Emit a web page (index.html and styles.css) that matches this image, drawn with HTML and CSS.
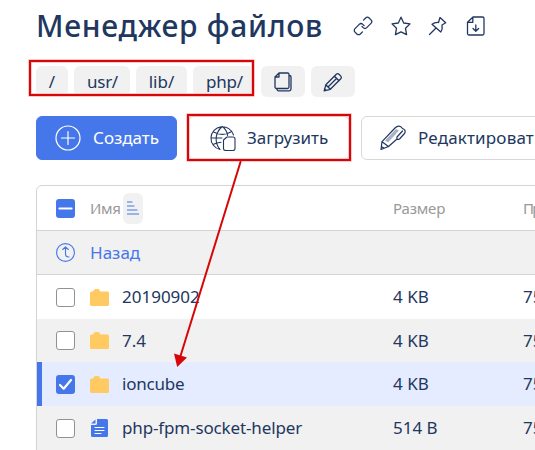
FILE: index.html
```html
<!DOCTYPE html>
<html lang="ru">
<head>
<meta charset="utf-8">
<title>Менеджер файлов</title>
<link rel="stylesheet" href="styles.css">
</head>
<body>
<header class="page-head">
  <h1 class="title">Менеджер файлов</h1>
  <div class="head-icons">
    <svg class="ico" viewBox="0 0 20 20"><g transform="rotate(-45 10 10)"><path d="M5.500 13.800H2.500A2.500 2.500 0 0 1 0 11.300V8.700A2.500 2.500 0 0 1 2.500 6.200H8.500A2.500 2.500 0 0 1 11 8.700V10.500M14.500 6.200H17.500A2.500 2.500 0 0 1 20 8.700V11.300A2.500 2.500 0 0 1 17.500 13.800H11.500A2.500 2.500 0 0 1 9 11.300V9.500"/></g></svg>
    <svg class="ico" viewBox="0 0 20 20"><path d="M10 1.200 12.700 7 19 7.900 14.500 12.200 15.600 18.700 10 15.900 4.400 18.700 5.500 12.200 1 7.900 7.300 7Z"/></svg>
    <svg class="ico" viewBox="0 0 20 20"><path d="M12 1.500 17.700 6.800 14 9C14.700 12 14 14 12.800 16L4 8.200C6 6.800 8 6.300 10.500 6.500ZM8 12 1.500 18.500"/></svg>
    <svg class="ico" viewBox="0 0 20 20"><path d="M7 1H16.500a1.500 1.500 0 0 1 1.500 1.500V17.500a1.500 1.500 0 0 1-1.500 1.500H3A1.500 1.500 0 0 1 1.500 17.500V6.300ZM6.800 1.500V6.300H1.500M9.800 9V15M7 12.500 9.800 15.300 12.600 12.500"/></svg>
  </div>
</header>

<nav class="crumbs">
  <a class="chip chip-root">/</a>
  <a class="chip chip-usr">usr/</a>
  <a class="chip chip-lib">lib/</a>
  <a class="chip chip-php">php/</a>
  <button class="chip chip-btn"><svg class="ico" viewBox="0 0 20 20"><path d="M6 1H14.500a1.500 1.500 0 0 1 1.500 1.500V15a1.500 1.500 0 0 1-1.500 1.500H3.500A1.500 1.500 0 0 1 2 15V5ZM6 1V5H2M16 3.500h.500A1.500 1.500 0 0 1 18 5V17a1.800 1.800 0 0 1-1.800 1.800H5.500A1.500 1.500 0 0 1 4 17.300"/></svg></button>
  <button class="chip chip-btn"><svg class="ico" viewBox="0 0 20 20"><path d="M1.200 18.800 2.800 12.800 13.300 2.300a2 2 0 0 1 2.700 0L17.800 4.100a2 2 0 0 1 0 2.700L7.300 17.300ZM2.800 12.800 7.300 17.300M11.500 4.200 16 8.700M5 15 13.500 6.500M1.500 16.700 3.300 18.400"/></svg></button>
</nav>

<div class="actions">
  <button class="btn btn-create"><svg class="big" viewBox="0 0 26 26"><circle cx="13" cy="13" r="12"/><path d="M13 6.500V19.500M6.500 13H19.500"/></svg><span>Создать</span></button>
  <button class="btn btn-upload"><svg class="big" viewBox="0 0 26 26"><path d="M10 24.500A11.500 11.500 0 1 1 23.500 10M3 6.800C9 10 16 10 21.300 6.800M1.200 13H12M3 19.500C5.500 18 8 17.300 11 17.200M12.300 1.500C4.500 8 4.500 18 10 24.500M12.300 1.500C15.500 4 17.200 7 17.600 10.500"/><path class="sheet" d="M17 12H23a2 2 0 0 1 2 2V23.500a2 2 0 0 1-2 2H15.500a2 2 0 0 1-2-2V15Z"/></svg><span>Загрузить</span></button>
  <button class="btn btn-edit"><svg class="big" viewBox="0 0 26 26"><path class="shade" d="M5 15.500 16 4 19 5.500 8 17.500Z"/><path d="M1 24.500 2 16.700 15 3C17.500.5 20.500.5 22.500 3.500M2 16.700 8.500 21.500 1 24.500M8.500 21.500 17 14M22.500 3.500Q26.500 5 24.500 8.500L19.500 14Q16.500 15.500 17 12L22.500 6M1.300 21.500 4.300 23.200"/></svg><span class="t-edit">Редактировать</span></button>
</div>

<main class="table">
  <div class="row row-head">
    <span class="check check-on"><svg viewBox="0 0 19 19"><path d="M3.500 9.500H15.500"/></svg></span>
    <div class="name-head"><span class="t-name">Имя</span><span class="sort"><svg viewBox="0 0 12 14"><path d="M0 1H5M0 5H7M0 9H10M0 13H12"/></svg></span></div>
    <span class="t-size">Размер</span><span class="t-rights">Права</span>
  </div>
  <div class="row row-back">
    <svg class="back" viewBox="0 0 19 19"><circle cx="9.500" cy="9.500" r="8.900"/><path d="M6.700 6.500 9.500 3.800 12.300 6.500M9.500 4V11Q9.500 14 13 14"/></svg>
    <span>Назад</span>
  </div>
  <div class="row">
    <span class="check"></span>
    <svg class="folder" viewBox="0 0 19 17"><path d="M0 4Q0 2.500 1.500 2.500H3L4 .8Q4.500 0 5.500 0H8Q9 0 9.500.8L10.200 2.500H17.500Q19 2.500 19 4V15.500Q19 17 17.500 17H1.500Q0 17 0 15.500Z"/></svg>
    <span>20190902</span><span>4 KB</span><span>755</span>
  </div>
  <div class="row row-alt">
    <span class="check"></span>
    <svg class="folder" viewBox="0 0 19 17"><path d="M0 4Q0 2.500 1.500 2.500H3L4 .8Q4.500 0 5.500 0H8Q9 0 9.500.8L10.200 2.500H17.500Q19 2.500 19 4V15.500Q19 17 17.500 17H1.500Q0 17 0 15.500Z"/></svg>
    <span>7.4</span><span>4 KB</span><span>755</span>
  </div>
  <div class="row row-selected">
    <span class="check check-on"><svg viewBox="0 0 19 19"><path d="M4 10 7.700 13.700 15 5"/></svg></span>
    <svg class="folder" viewBox="0 0 19 17"><path d="M0 4Q0 2.500 1.500 2.500H3L4 .8Q4.500 0 5.500 0H8Q9 0 9.500.8L10.200 2.500H17.500Q19 2.500 19 4V15.500Q19 17 17.500 17H1.500Q0 17 0 15.500Z"/></svg>
    <span class="t-ion">ioncube</span><span>4 KB</span><span>755</span>
  </div>
  <div class="row row-alt">
    <span class="check"></span>
    <svg class="file" viewBox="0 0 17 18"><path class="file-body" d="M6 0H15.500Q17 0 17 1.500V16.500Q17 18 15.500 18H1.500Q0 18 0 16.500V6H4.500Q6 6 6 4.500Z"/><path class="file-body" d="M0 4.500 4.500.5V4.500Z"/><path class="file-lines" d="M4 8.500H13M4 11.500H13M4 14.500H10"/></svg>
    <span class="t-helper">php-fpm-socket-helper</span><span>514 B</span><span>755</span>
  </div>
</main>

<svg class="marks" viewBox="0 0 535 450">
  <g class="halo"><rect x="30" y="61" width="223" height="34"/><rect x="188" y="115" width="162" height="45"/></g>
  <g class="line"><rect x="30" y="61" width="223" height="34"/><rect x="188" y="115" width="162" height="45"/><path d="M240.500 162 180.500 356"/></g>
  <path class="tip" d="M177.200 367 174 353.500 187 357.500Z"/>
</svg>
</body>
</html>
```
FILE: styles.css
```css
* { box-sizing: border-box; }
body {
  margin: 0;
  width: 535px;
  height: 450px;
  overflow: hidden;
  background: #fff;
  color: #223760;
  font: 17px/24px "Noto Sans", sans-serif;
}
button { font: inherit; color: inherit; border: 0; }
svg { display: block; flex: none; fill: none; stroke: #223760; stroke-linejoin: round; stroke-linecap: round; }
span { white-space: nowrap; }

.page-head { display: flex; height: 66px; padding: 6px 0 0 36px; }
.title { width: 317px; margin: 0; font: 500 30px/40px "Noto Sans", sans-serif; letter-spacing: .7px; white-space: nowrap; }
.head-icons { display: flex; gap: 17.500px; padding-top: 10px; }
.ico { width: 20px; height: 20px; stroke-width: 1.300; }

.crumbs { display: flex; gap: 6px; height: 31px; padding-left: 36px; }
.chip { display: flex; align-items: center; justify-content: center; height: 31px; padding: 0; border-radius: 6px; background: #f1f1f1; }
.chip-root { width: 32px; }
.chip-usr { width: 56px; padding-left: 1px; letter-spacing: -.3px; }
.chip-lib { width: 51px; }
.chip-php { width: 62px; padding-left: 1px; letter-spacing: -.2px; }
.chip-btn { width: 44px; }

.actions { display: flex; gap: 11px; margin-top: 19px; padding-left: 36px; }
.btn { display: flex; flex: none; align-items: center; gap: 12px; height: 44px; padding: 0 0 0 18px; border: 1px solid #d8d8d8; border-radius: 6px; background: #fff; }
.big { width: 26px; height: 26px; stroke-width: 1.200; }
.btn-create { width: 141px; border-color: #4677ea; background: #4677ea; color: #fff; }
.btn-create .big { stroke: #fff; }
.btn-upload { width: 162px; gap: 11px; padding-left: 21px; }
.btn-upload .big { stroke-width: 1.100; }
.btn-edit { width: 200px; padding-left: 18px; }
.t-edit { letter-spacing: .18px; }
.sheet { fill: #fff; }
.shade { fill: #aab3c4; stroke: none; }

.table { width: 520px; height: 280px; margin-top: 25px; margin-left: 36px; border: 1px solid #d4d4d4; border-radius: 6px 0 0; overflow: hidden; }
.row { display: grid; grid-template-columns: 34px 32px 271px 130px 60px; align-items: center; height: 44px; padding-left: 19px; }
.row-head { height: 45px; grid-template-columns: 34px 303px 130px 60px; border-bottom: 1px solid #d4d4d4; color: #999; font-size: 15px; }
.row-back { grid-template-columns: 34px 300px; border-bottom: 1px solid #d4d4d4; background: #f1f1f1; color: #4677ea; }
.row-alt { background: #f1f1f1; }
.row-alt:nth-child(4) { height: 43px; }
.row-selected { background: #e5ecff; box-shadow: inset 5px 0 #4677ea; }
.check { width: 19px; height: 19px; border: 1px solid #929292; border-radius: 3px; background: #fff; }
.check-on { border: 0; background: #4677ea; }
.check-on svg { width: 19px; height: 19px; stroke: #fff; stroke-width: 2.200; }
.name-head { display: flex; align-items: center; }
.t-name { width: 33px; letter-spacing: -.3px; }
.t-size { letter-spacing: -.2px; }
.t-rights { letter-spacing: -1.800px; }
.sort { display: flex; align-items: center; justify-content: center; width: 20px; height: 31px; border-radius: 6px; background: #f1f1f1; }
.sort svg { width: 12px; height: 14px; stroke: #4677ea; stroke-width: 1.200; }
.back { width: 19px; height: 19px; stroke: #4677ea; stroke-width: 1.100; }
.folder { width: 19px; height: 17px; fill: #ffca62; stroke: none; }
.file { width: 17px; height: 18px; margin-left: 1px; }
.file-body { fill: #4677ea; stroke: none; }
.file-lines { stroke: #fff; stroke-width: 1; }
.t-ion { letter-spacing: -.2px; }
.t-helper { letter-spacing: -.14px; }

.marks { position: absolute; top: 0; left: 0; width: 535px; height: 450px; }
.halo { stroke: #f4b5b5; stroke-width: 3.400; stroke-linejoin: miter; }
.line { stroke: #d80606; stroke-width: 2; stroke-linejoin: miter; }
.tip { fill: #d80606; stroke: none; }
```
